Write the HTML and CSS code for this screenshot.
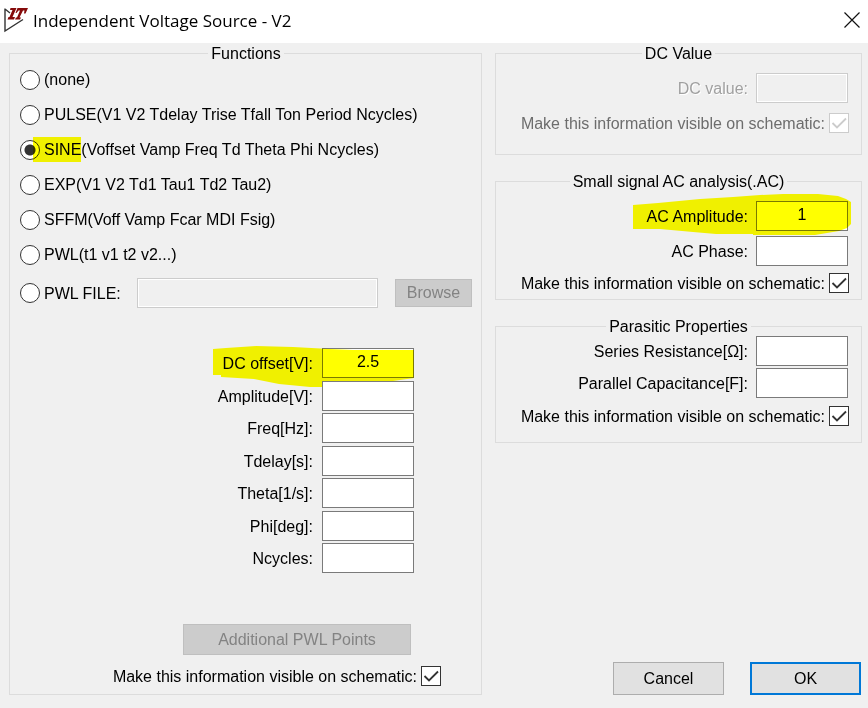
FILE: index.html
```
<!DOCTYPE html>
<html lang="en">
<head>
    <meta charset="UTF-8">
    <meta name="viewport" content="width=device-width, initial-scale=1.0">
    <title>Independent Voltage Source - V2</title>
    <link rel="stylesheet" href="styles.css">
</head>
<body>

    <header class="titlebar">
        <svg class="logo" width="24" height="26" viewBox="0 0 24 26" aria-hidden="true">
            <path d="M1 1.500V24L19 12.500M1 2L6 6" fill="none" stroke="#333" stroke-width="1.400"/>
            <path d="M6.500 1H12.500L8.500 10H11L10 12.500H3.500L4.500 10H5.500L8.500 3H6Z" fill="#850a0a"/>
            <path d="M13.500 1H24L21.500 6.500H20L20.500 3.500H19L15.500 10.500H17L16 12.500H11L12 10.500H13L16 3.500H14.500L12.500 6H11.500Z" fill="#850a0a"/>
        </svg>
        <h1>Independent Voltage Source - V2</h1>
        <button type="button" class="close" aria-label="Close">
            <svg width="16" height="16" viewBox="0 0 16 16"><path d="M0.500 0.500L15.500 15.500M15.500 0.500L0.500 15.500" fill="none" stroke="#111" stroke-width="1.200"/></svg>
        </button>
    </header>

    <form class="dialog">
        <fieldset class="functions">
            <legend>Functions</legend>

            <label class="option"><input type="radio" name="func" value="none">(none)</label>
            <label class="option"><input type="radio" name="func" value="pulse">PULSE(V1 V2 Tdelay Trise Tfall Ton Period Ncycles)</label>
            <label class="option"><input type="radio" name="func" value="sine" checked><span><mark>SINE</mark>(Voffset Vamp Freq Td Theta Phi Ncycles)</span></label>
            <label class="option"><input type="radio" name="func" value="exp">EXP(V1 V2 Td1 Tau1 Td2 Tau2)</label>
            <label class="option"><input type="radio" name="func" value="sffm">SFFM(Voff Vamp Fcar MDI Fsig)</label>
            <label class="option"><input type="radio" name="func" value="pwl">PWL(t1 v1 t2 v2...)</label>
            <div class="file-row">
                <label class="option"><input type="radio" name="func" value="pwlfile">PWL FILE:</label>
                <input type="text" class="box file-name" aria-label="PWL file name" disabled>
                <button type="button" class="btn browse" disabled>Browse</button>
            </div>

            <div class="params">
                <div class="field">
                    <label for="offset">DC offset[V]:</label>
                    <input type="text" class="box" id="offset" value="2.5">
                    <svg class="marker marker-offset" width="201" height="43" viewBox="0 0 201 43" aria-hidden="true">
                        <path d="M0 4L13 3L43 1L80 2L117 4L140 5H201V33L180 36L155 39L132 42H97L66 39L41 34L8 32V30H0Z" fill="#ff0"/>
                    </svg>
                </div>
                <div class="field">
                    <label for="amplitude">Amplitude[V]:</label>
                    <input type="text" class="box" id="amplitude">
                </div>
                <div class="field">
                    <label for="freq">Freq[Hz]:</label>
                    <input type="text" class="box" id="freq">
                </div>
                <div class="field">
                    <label for="tdelay">Tdelay[s]:</label>
                    <input type="text" class="box" id="tdelay">
                </div>
                <div class="field">
                    <label for="theta">Theta[1/s]:</label>
                    <input type="text" class="box" id="theta">
                </div>
                <div class="field">
                    <label for="phi">Phi[deg]:</label>
                    <input type="text" class="box" id="phi">
                </div>
                <div class="field">
                    <label for="ncycles">Ncycles:</label>
                    <input type="text" class="box" id="ncycles">
                </div>
            </div>

            <button type="button" class="btn points" disabled>Additional PWL Points</button>
            <label class="visible">Make this information visible on schematic:<input type="checkbox" checked></label>
        </fieldset>

        <div class="side">
            <fieldset class="dc">
                <legend>DC Value</legend>
                <div class="field disabled">
                    <label for="dcvalue">DC value:</label>
                    <input type="text" class="box" id="dcvalue" disabled>
                </div>
                <label class="visible dimmed">Make this information visible on schematic:<input type="checkbox" checked disabled></label>
            </fieldset>

            <fieldset class="ac">
                <legend>Small signal AC analysis(.AC)</legend>
                <div class="field">
                    <label for="acamp">AC Amplitude:</label>
                    <input type="text" class="box" id="acamp" value="1">
                    <svg class="marker marker-ac" width="219" height="44" viewBox="0 0 219 44" aria-hidden="true">
                        <path d="M0 12L25 10L67 6L100 4L127 2L150 1H185L205 3L213 6L218 9V31L214 35L206 38L182 42H120V41L83 41L60 39L27 36H0Z" fill="#ff0"/>
                    </svg>
                </div>
                <div class="field">
                    <label for="acphase">AC Phase:</label>
                    <input type="text" class="box" id="acphase">
                </div>
                <label class="visible">Make this information visible on schematic:<input type="checkbox" checked></label>
            </fieldset>

            <fieldset class="parasitic">
                <legend>Parasitic Properties</legend>
                <div class="field">
                    <label for="rser">Series Resistance[Ω]:</label>
                    <input type="text" class="box" id="rser">
                </div>
                <div class="field">
                    <label for="cpar">Parallel Capacitance[F]:</label>
                    <input type="text" class="box" id="cpar">
                </div>
                <label class="visible">Make this information visible on schematic:<input type="checkbox" checked></label>
            </fieldset>

            <div class="actions">
                <button type="button" class="btn">Cancel</button>
                <button type="submit" class="btn primary">OK</button>
            </div>
        </div>
    </form>

</body>
</html>
```
FILE: styles.css
```
* {
    box-sizing: border-box;
}

body {
    margin: 0;
    min-height: 100vh;
    background-color: #f0f0f0;
    color: #000;
    font-family: "Liberation Sans", Arial, sans-serif;
    font-size: 16px;
    line-height: 20px;
}

input, button {
    font: inherit;
    margin: 0;
}

/* title bar */
.titlebar {
    display: flex;
    align-items: center;
    height: 43px;
    padding: 0 8px 3px 4px;
    background-color: #fff;
}

.titlebar h1 {
    flex: 1;
    margin: 0 0 0 5px;
    font-family: "Open Sans", "Segoe UI", sans-serif;
    font-size: 17px;
    font-weight: normal;
    line-height: 24px;
    padding-top: 2px;
}

.close {
    display: flex;
    padding: 0;
    border: none;
    background: none;
}

/* layout */
.dialog {
    display: grid;
    grid-template-columns: 473fr 367fr;
    gap: 13px;
    padding: 0 6px 13px 9px;
}

.side {
    display: flex;
    flex-direction: column;
    gap: 16px;
}

fieldset {
    min-width: 0;
    margin: 0;
    padding: 0;
    border: 1px solid #dcdcdc;
}

legend {
    margin: 0 auto;
    padding: 2px 3px 0;
    line-height: 18px;
}

.functions {
    padding: 0 9px 6px 10px;
}

/* radio options */
.option {
    display: flex;
    align-items: flex-start;
    gap: 4px;
    height: 35px;
    padding-top: 7px;
    white-space: nowrap;
}

input[type="radio"] {
    appearance: none;
    flex: none;
    width: 20px;
    height: 20px;
    border: 1px solid #333;
    border-radius: 50%;
    background-color: #fff;
}

input[type="radio"]:checked {
    background-image: radial-gradient(circle, #333 5px, transparent 6px);
}

mark {
    position: relative;
    background: none;
    color: inherit;
}

mark::before {
    content: "";
    position: absolute;
    top: -4px;
    bottom: -4px;
    left: -11px;
    right: 0;
    background-color: #ff0;
    mix-blend-mode: multiply;
}

.file-row {
    display: flex;
    align-items: center;
    height: 40px;
}

.file-row .option {
    height: 40px;
    padding-top: 10px;
    line-height: 22px;
}

.file-row .file-name {
    flex: 1;
    min-width: 0;
    margin: 0 17px 0 16px;
}

/* text fields */
.box {
    width: 92px;
    height: 30px;
    padding: 0 4px 2px;
    border: 1px solid #7a7a7a;
    background-color: #fff;
    color: #000;
    text-align: center;
}

.box:disabled {
    border-color: #ccc;
    background-color: #f0f0f0;
    box-shadow: inset 0 0 0 1px #fff;
}

.field {
    position: relative;
    display: flex;
    align-items: center;
    justify-content: flex-end;
    gap: 8px;
}

.field label {
    padding-top: 2px;
}

.disabled label {
    color: #a0a0a0;
    text-shadow: 1px 1px #fff;
}

.params {
    margin: 35px 58px 0 0;
}

.params .field {
    gap: 9px;
    margin-bottom: 2px;
}

.params .field:nth-child(odd) {
    margin-bottom: 3px;
}

.side .field {
    margin-right: 13px;
}

/* highlighter strokes over the fields */
.marker {
    position: absolute;
    mix-blend-mode: multiply;
    pointer-events: none;
}

.marker-offset {
    top: -3px;
    right: 0;
}

.marker-ac {
    top: -8px;
    right: -4px;
}

/* check boxes */
.visible {
    display: flex;
    align-items: flex-start;
    justify-content: flex-end;
    gap: 4px;
    margin-right: 12px;
    line-height: 22px;
    white-space: nowrap;
}

.functions .visible {
    margin: 11px 31px 0 0;
}

.dimmed {
    color: #6d6d6d;
}

input[type="checkbox"] {
    appearance: none;
    flex: none;
    width: 20px;
    height: 20px;
    border: 1px solid #333;
    background: #fff url("data:image/svg+xml,%3Csvg xmlns='http://www.w3.org/2000/svg' viewBox='0 0 18 18'%3E%3Cpath d='M2.500 9L7 13.500L16 4.500' fill='none' stroke='%23333' stroke-width='1.800'/%3E%3C/svg%3E") center / 18px no-repeat;
}

input[type="checkbox"]:disabled {
    border-color: #ccc;
    background-image: url("data:image/svg+xml,%3Csvg xmlns='http://www.w3.org/2000/svg' viewBox='0 0 18 18'%3E%3Cpath d='M2.500 9L7 13.500L16 4.500' fill='none' stroke='%23ccc' stroke-width='1.800'/%3E%3C/svg%3E");
}

/* right column groups */
.dc {
    padding: 10px 0 19px;
}

.dc .visible {
    margin-top: 10px;
}

.ac {
    padding: 10px 0 4px;
}

.ac .field + .field {
    margin-top: 5px;
}

.ac .visible {
    margin-top: 7px;
}

.parasitic {
    padding-bottom: 14px;
}

.parasitic .field + .field {
    margin-top: 2px;
}

.parasitic .visible {
    margin-top: 8px;
}

/* buttons */
.btn {
    width: 111px;
    height: 33px;
    padding: 0;
    border: 1px solid #adadad;
    background-color: #e1e1e1;
    color: #000;
}

.btn:disabled {
    border-color: #bfbfbf;
    background-color: #ccc;
    color: #838383;
}

.btn.primary {
    border: 2px solid #0078d7;
}

.browse {
    width: 77px;
    height: 28px;
}

.points {
    display: block;
    width: 228px;
    height: 31px;
    margin: 51px 61px 0 auto;
}

.actions {
    display: flex;
    justify-content: flex-end;
    gap: 26px;
    margin-top: auto;
    padding-right: 1px;
}
```
